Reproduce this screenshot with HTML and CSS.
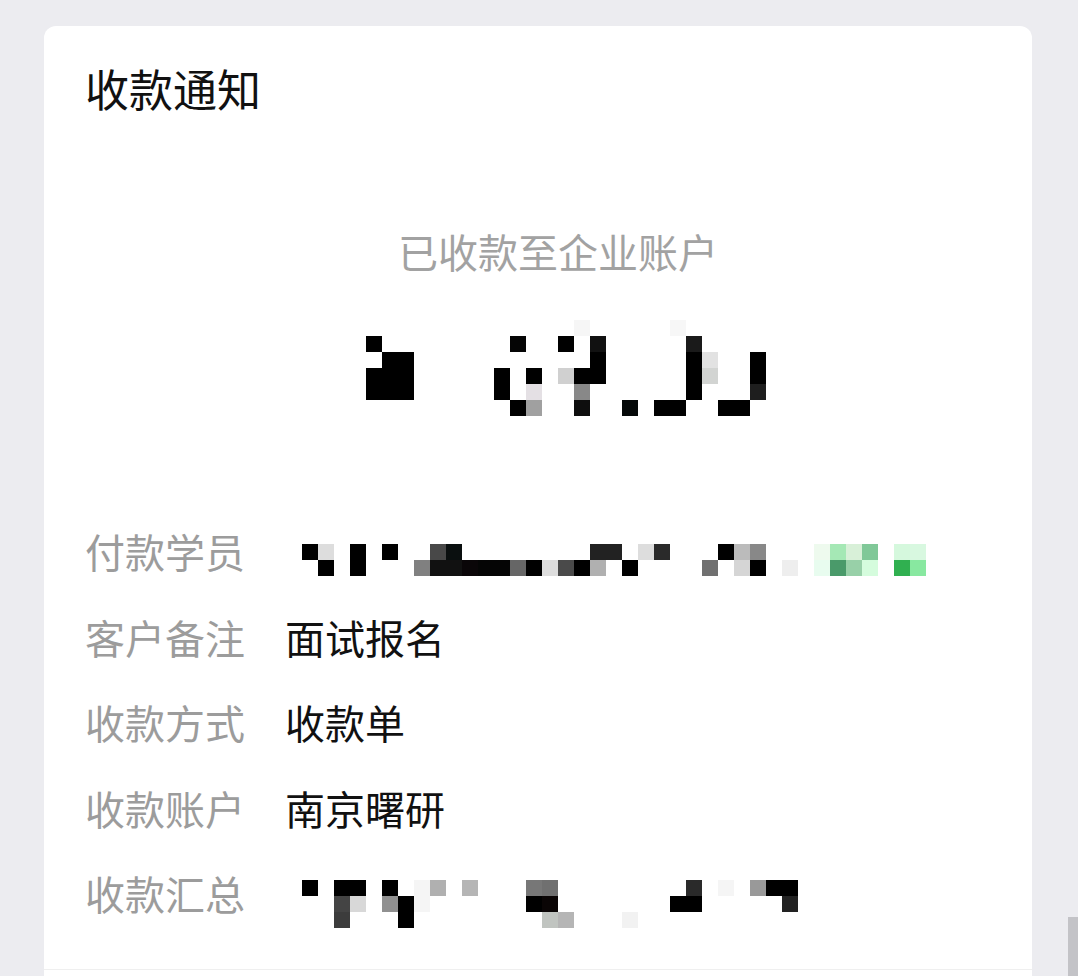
FILE: index.html
```html
<!DOCTYPE html>
<html lang="zh-CN">
<head>
  <meta charset="UTF-8">
  <meta name="viewport" content="width=device-width, initial-scale=1">
  <title>收款通知</title>
  <link rel="stylesheet" href="styles.css">
</head>
<body>

<div class="card">
  <h1 class="title">收款通知</h1>

  <div class="summary">
    <p class="summary-label">已收款至企业账户</p>
    <!-- 金额已打码 -->
    <svg class="amount" width="400" height="96" viewBox="0 0 400 96">
      <rect x="208" y="0" width="16" height="16" fill="#f6f6f6"/>
      <rect x="304" y="0" width="16" height="16" fill="#f7f7f7"/>
      <rect x="0" y="16" width="16" height="16" fill="#000"/>
      <rect x="144" y="16" width="16" height="16" fill="#050505"/>
      <rect x="192" y="16" width="16" height="16" fill="#000"/>
      <rect x="224" y="16" width="16" height="16" fill="#111"/>
      <rect x="320" y="16" width="16" height="16" fill="#1a1a1a"/>
      <rect x="16" y="32" width="32" height="16" fill="#000"/>
      <rect x="224" y="32" width="16" height="16" fill="#000"/>
      <rect x="320" y="32" width="16" height="16" fill="#000"/>
      <rect x="336" y="32" width="16" height="16" fill="#e2e2e2"/>
      <rect x="384" y="32" width="16" height="16" fill="#000"/>
      <rect x="0" y="48" width="48" height="16" fill="#000"/>
      <rect x="128" y="48" width="16" height="16" fill="#000"/>
      <rect x="160" y="48" width="16" height="16" fill="#000"/>
      <rect x="192" y="48" width="16" height="16" fill="#d0d0d0"/>
      <rect x="208" y="48" width="32" height="16" fill="#000"/>
      <rect x="320" y="48" width="16" height="16" fill="#000"/>
      <rect x="336" y="48" width="16" height="16" fill="#d2d4d2"/>
      <rect x="384" y="48" width="16" height="16" fill="#000"/>
      <rect x="0" y="64" width="48" height="16" fill="#000"/>
      <rect x="128" y="64" width="16" height="16" fill="#000"/>
      <rect x="160" y="64" width="16" height="16" fill="#e4e0e4"/>
      <rect x="208" y="64" width="16" height="16" fill="#888"/>
      <rect x="320" y="64" width="16" height="16" fill="#000"/>
      <rect x="384" y="64" width="16" height="16" fill="#1e1e1e"/>
      <rect x="144" y="80" width="16" height="16" fill="#000"/>
      <rect x="160" y="80" width="16" height="16" fill="#a0a0a0"/>
      <rect x="208" y="80" width="16" height="16" fill="#0e0e0e"/>
      <rect x="256" y="80" width="16" height="16" fill="#050808"/>
      <rect x="288" y="80" width="32" height="16" fill="#000"/>
      <rect x="352" y="80" width="32" height="16" fill="#000"/>
    </svg>
  </div>

  <div class="details">
    <div class="row">
      <span class="label">付款学员</span>
      <svg class="mosaic" width="640" height="46" viewBox="0 0 640 46">
        <rect x="16" y="14" width="16" height="16" fill="#000"/>
        <rect x="32" y="14" width="16" height="16" fill="#ddd"/>
        <rect x="64" y="14" width="16" height="16" fill="#000"/>
        <rect x="96" y="14" width="16" height="16" fill="#000"/>
        <rect x="144" y="14" width="16" height="16" fill="#484848"/>
        <rect x="160" y="14" width="16" height="16" fill="#0a0f0f"/>
        <rect x="304" y="14" width="32" height="16" fill="#222"/>
        <rect x="352" y="14" width="16" height="16" fill="#ddd"/>
        <rect x="368" y="14" width="16" height="16" fill="#2a2a2a"/>
        <rect x="432" y="14" width="16" height="16" fill="#000"/>
        <rect x="448" y="14" width="16" height="16" fill="#bbb"/>
        <rect x="464" y="14" width="16" height="16" fill="#888"/>
        <rect x="528" y="14" width="16" height="16" fill="#eefaee"/>
        <rect x="544" y="14" width="16" height="16" fill="#a5e8b5"/>
        <rect x="560" y="14" width="16" height="16" fill="#d8f0d8"/>
        <rect x="576" y="14" width="16" height="16" fill="#80c898"/>
        <rect x="608" y="14" width="16" height="16" fill="#d5f8dd"/>
        <rect x="624" y="14" width="16" height="16" fill="#d8f8e0"/>
        <rect x="32" y="30" width="16" height="16" fill="#000"/>
        <rect x="64" y="30" width="16" height="16" fill="#000"/>
        <rect x="128" y="30" width="16" height="16" fill="#808080"/>
        <rect x="144" y="30" width="32" height="16" fill="#111"/>
        <rect x="176" y="30" width="16" height="16" fill="#0a0608"/>
        <rect x="192" y="30" width="32" height="16" fill="#050505"/>
        <rect x="224" y="30" width="16" height="16" fill="#666"/>
        <rect x="240" y="30" width="16" height="16" fill="#000"/>
        <rect x="256" y="30" width="16" height="16" fill="#ddd"/>
        <rect x="272" y="30" width="16" height="16" fill="#4a4a4a"/>
        <rect x="288" y="30" width="16" height="16" fill="#000"/>
        <rect x="304" y="30" width="16" height="16" fill="#b0b0b0"/>
        <rect x="336" y="30" width="16" height="16" fill="#000"/>
        <rect x="416" y="30" width="16" height="16" fill="#707070"/>
        <rect x="448" y="30" width="16" height="16" fill="#d5d5d5"/>
        <rect x="464" y="30" width="16" height="16" fill="#000"/>
        <rect x="496" y="30" width="16" height="16" fill="#eee"/>
        <rect x="528" y="30" width="16" height="16" fill="#e8fcef"/>
        <rect x="544" y="30" width="16" height="16" fill="#4a9a6a"/>
        <rect x="560" y="30" width="16" height="16" fill="#98d0a8"/>
        <rect x="576" y="30" width="16" height="16" fill="#d5fcdd"/>
        <rect x="608" y="30" width="16" height="16" fill="#30b050"/>
        <rect x="624" y="30" width="16" height="16" fill="#88e8a0"/>
      </svg>
    </div>
    <div class="row">
      <span class="label">客户备注</span>
      <span class="value">面试报名</span>
    </div>
    <div class="row">
      <span class="label">收款方式</span>
      <span class="value">收款单</span>
    </div>
    <div class="row">
      <span class="label">收款账户</span>
      <span class="value">南京曙研</span>
    </div>
    <div class="row">
      <span class="label">收款汇总</span>
      <svg class="mosaic" width="512" height="66" viewBox="0 0 512 66">
        <rect x="16" y="18" width="16" height="16" fill="#000"/>
        <rect x="48" y="18" width="32" height="16" fill="#000"/>
        <rect x="96" y="18" width="16" height="16" fill="#000"/>
        <rect x="128" y="18" width="16" height="16" fill="#f5f5f5"/>
        <rect x="144" y="18" width="16" height="16" fill="#b0b0b0"/>
        <rect x="176" y="18" width="16" height="16" fill="#b5b5b5"/>
        <rect x="240" y="18" width="16" height="16" fill="#777"/>
        <rect x="256" y="18" width="16" height="16" fill="#707070"/>
        <rect x="400" y="18" width="16" height="16" fill="#2a2a2a"/>
        <rect x="432" y="18" width="16" height="16" fill="#f5f5f5"/>
        <rect x="464" y="18" width="16" height="16" fill="#999"/>
        <rect x="480" y="18" width="32" height="16" fill="#000"/>
        <rect x="48" y="34" width="16" height="16" fill="#444"/>
        <rect x="64" y="34" width="16" height="16" fill="#d8d8d8"/>
        <rect x="96" y="34" width="16" height="16" fill="#909090"/>
        <rect x="112" y="34" width="16" height="16" fill="#000"/>
        <rect x="128" y="34" width="16" height="16" fill="#f5f5f5"/>
        <rect x="240" y="34" width="16" height="16" fill="#000"/>
        <rect x="256" y="34" width="16" height="16" fill="#0a0505"/>
        <rect x="384" y="34" width="32" height="16" fill="#000"/>
        <rect x="496" y="34" width="16" height="16" fill="#222"/>
        <rect x="48" y="50" width="16" height="16" fill="#3c3c3c"/>
        <rect x="112" y="50" width="16" height="16" fill="#000"/>
        <rect x="256" y="50" width="16" height="16" fill="#c0c4c0"/>
        <rect x="272" y="50" width="16" height="16" fill="#b5b5b5"/>
        <rect x="336" y="50" width="16" height="16" fill="#f2f2f2"/>
      </svg>
    </div>
  </div>

  <div class="card-foot"></div>
</div>

<div class="scroll-thumb"></div>

</body>
</html>
```

FILE: styles.css
```css
html, body { margin: 0; height: 100%; overflow: hidden; }
body { font-family: "Noto Sans CJK SC", "Noto Sans", sans-serif; background: #ececf0; padding: 26px 46px 0 44px; box-sizing: border-box; }
.card { background: #fff; border-radius: 12px 12px 0 0; padding: 34px 42px 0 41px; }
.title { margin: 0; font-size: 44px; line-height: 56px; font-weight: 400; color: #111; }
.summary { margin-top: 107px; padding-left: 41px; }
.summary-label { margin: 0; text-align: center; font-size: 40px; line-height: 56px; color: #a2a2a2; }
.amount { display: block; margin: 41px 0 0 240px; }
.details { margin-top: 94.25px; padding-bottom: 31.25px; }
.row { display: flex; align-items: center; height: 85.5px; }
.label { width: 199px; flex-shrink: 0; padding: 0 1px 4px 0; font-size: 40px; line-height: 56px; color: #9c9c9c; }
.value { padding-bottom: 4px; font-size: 40px; line-height: 56px; color: #111; }
.mosaic { display: block; flex-shrink: 0; margin-left: 1px; }
.card-foot { height: 6px; margin: 0 -42px 0 -41px; border-top: 1px solid #efefef; }
.scroll-thumb { position: fixed; right: 0; top: 917px; bottom: 0; width: 10px; background: #c3c3c7; }
```
